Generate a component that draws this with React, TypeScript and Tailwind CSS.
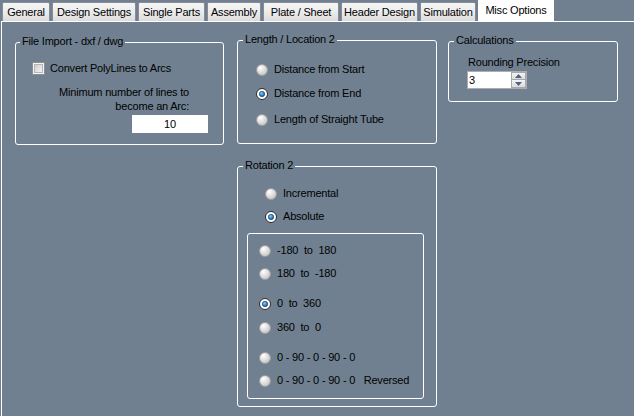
import { useId } from "react";

const TABS = [
  { label: "General", w: "w-[48px]" },
  { label: "Design Settings", w: "w-[84px]" },
  { label: "Single Parts", w: "w-[67px]" },
  { label: "Assembly", w: "w-[54px]" },
  { label: "Plate / Sheet", w: "w-[76px]" },
  { label: "Header Design", w: "w-[77px]" },
  { label: "Simulation", w: "w-[56px]" },
];

function useSafeId() {
  return useId().replace(/[^a-zA-Z0-9_-]/g, "");
}

function RadioDot({ checked }: { checked?: boolean }) {
  const id = useSafeId();
  return (
    <svg width="12" height="12" viewBox="0 0 12 12" className="shrink-0">
      <defs>
        <radialGradient id={`rf${id}`} cx="35%" cy="30%" r="75%">
          <stop offset="0" stopColor="#ffffff" />
          <stop offset="1" stopColor="#c4c4c4" />
        </radialGradient>
        <radialGradient id={`rd${id}`} cx="40%" cy="35%" r="70%">
          <stop offset="0" stopColor="#7fd0ff" />
          <stop offset="1" stopColor="#0a4f94" />
        </radialGradient>
      </defs>
      <circle cx="6" cy="6" r="5.5" fill={checked ? "#ffffff" : `url(#rf${id})`} stroke={checked ? "#2a2a2a" : "#9a9a9a"} />
      {checked && <circle cx="6" cy="6" r="2.7" fill={`url(#rd${id})`} stroke="#0b3a6a" strokeWidth="0.6" />}
    </svg>
  );
}

function Radio({ label, checked, className = "" }: { label: string; checked?: boolean; className?: string }) {
  return (
    <div className={`flex h-[13px] items-center gap-[6px] ${className}`}>
      <RadioDot checked={checked} />
      <span className="whitespace-pre leading-[13px]">{label}</span>
    </div>
  );
}

function Group({ label, className, labelLeft = "left-[5px]", children }: { label?: string; className: string; labelLeft?: string; children: React.ReactNode }) {
  return (
    <div className={`relative shrink-0 rounded-[3px] border border-white ${className}`}>
      {label && (
        <span className={`absolute -top-[8px] ${labelLeft} bg-[#708090] px-[2px] leading-[13px] whitespace-nowrap`}>{label}</span>
      )}
      {children}
    </div>
  );
}

export default function App() {
  const cbId = useSafeId();
  return (
    <div className="h-[416px] w-[634px] overflow-hidden bg-[#708090] font-['Liberation_Sans',Arial,sans-serif] text-[11px] tracking-[-0.2px] text-black">
      {/* Tabs */}
      <div className="flex h-[21px] items-end gap-[2px] pl-[2px]">
        {TABS.map((t) => (
          <div
            key={t.label}
            className={`${t.w} flex h-[19px] shrink-0 items-center justify-center rounded-t-[2px] border border-b-0 border-[#898c95] bg-gradient-to-b from-[#f6f6f6] via-[#ececec] to-[#dcdcdc] pt-[1px] leading-[13px] whitespace-nowrap`}
          >
            {t.label}
          </div>
        ))}
        <div className="flex h-[21px] w-[76px] shrink-0 items-center justify-center bg-white pb-[1px] leading-[13px] whitespace-nowrap">
          Misc Options
        </div>
      </div>

      {/* Tab page */}
      <div className="ml-[1px] flex h-[395px] items-start border-l border-t border-white">
        {/* File Import */}
        <Group label="File Import - dxf / dwg" labelLeft="left-[4px]" className="ml-[13px] mt-[20px] h-[103px] w-[209px]">
          <div className="flex flex-col pt-[19px]">
            <div className="flex h-[13px] items-center gap-[5px] pl-[16px]">
              <svg width="13" height="13" viewBox="0 0 13 13" className="shrink-0">
                <defs>
                  <linearGradient id={`cb${cbId}`} x1="0" y1="0" x2="1" y2="1">
                    <stop offset="0" stopColor="#cbcbcb" />
                    <stop offset="1" stopColor="#f6f6f6" />
                  </linearGradient>
                </defs>
                <rect x="0.5" y="0.5" width="12" height="12" fill="#f4f4f4" stroke="#8e8f8f" />
                <rect x="2.5" y="2.5" width="8" height="8" fill={`url(#cb${cbId})`} stroke="#b5b5b5" />
              </svg>
              <span className="leading-[13px] whitespace-nowrap">Convert PolyLines to Arcs</span>
            </div>
            <div className="mt-[10px] pr-[34px] text-right leading-[14px]">
              <div>Minimum number of lines to</div>
              <div>become an Arc:</div>
            </div>
            <div className="mt-[2px] flex justify-end pr-[15px]">
              <div className="flex h-[18px] w-[76px] items-center justify-center bg-white leading-[13px]">10</div>
            </div>
          </div>
        </Group>

        {/* Middle column */}
        <div className="ml-[13px] flex flex-col">
          <Group label="Length / Location 2" className="mt-[18px] h-[104px] w-[200px]">
            <div className="flex flex-col pl-[18px] pt-[22px]">
              <Radio label="Distance from Start" />
              <Radio label="Distance from End" checked className="mt-[11px]" />
              <Radio label="Length of Straight Tube" className="mt-[13px]" />
            </div>
          </Group>

          <Group label="Rotation 2" className="mt-[22px] h-[241px] w-[200px]">
            <div className="flex flex-col pt-[20px]">
              <Radio label="Incremental" className="pl-[27px]" />
              <Radio label="Absolute" checked className="mt-[10px] pl-[27px]" />
              <Group className="ml-[9px] mt-[10px] h-[166px] w-[177px]">
                <div className="flex flex-col pl-[11px] pt-[10px]">
                  <Radio label="-180  to  180" />
                  <Radio label="180  to  -180" className="mt-[10px]" />
                  <Radio label="0  to  360" checked className="mt-[17px]" />
                  <Radio label="360  to  0" className="mt-[11px]" />
                  <Radio label="0 - 90 - 0 - 90 - 0" className="mt-[17px]" />
                  <Radio label="0 - 90 - 0 - 90 - 0   Reversed" className="mt-[10px]" />
                </div>
              </Group>
            </div>
          </Group>
        </div>

        {/* Calculations */}
        <Group label="Calculations" className="ml-[11px] mt-[19px] h-[61px] w-[170px]">
          <div className="flex flex-col items-start pl-[18px] pt-[14px]">
            <span className="ml-[1px] leading-[13px] whitespace-nowrap">Rounding Precision</span>
            <div className="mt-[2px] flex h-[18px] w-[60px] items-stretch border border-[#abadb3] bg-white">
              <span className="flex-1 pl-[1px] leading-[16px]">3</span>
              <div className="flex w-[15px] flex-col">
                <div className="flex h-[8px] items-center justify-center border border-[#a7a7a7] bg-gradient-to-b from-[#f4f4f4] to-[#dcdcdc]">
                  <svg width="7" height="4" viewBox="0 0 7 4"><polygon points="0,4 7,4 3.5,0" fill="#4d6185" /></svg>
                </div>
                <div className="flex h-[8px] items-center justify-center border border-t-0 border-[#a7a7a7] bg-gradient-to-b from-[#f4f4f4] to-[#dcdcdc]">
                  <svg width="7" height="4" viewBox="0 0 7 4"><polygon points="0,0 7,0 3.5,4" fill="#4d6185" /></svg>
                </div>
              </div>
            </div>
          </div>
        </Group>
      </div>
    </div>
  );
}
